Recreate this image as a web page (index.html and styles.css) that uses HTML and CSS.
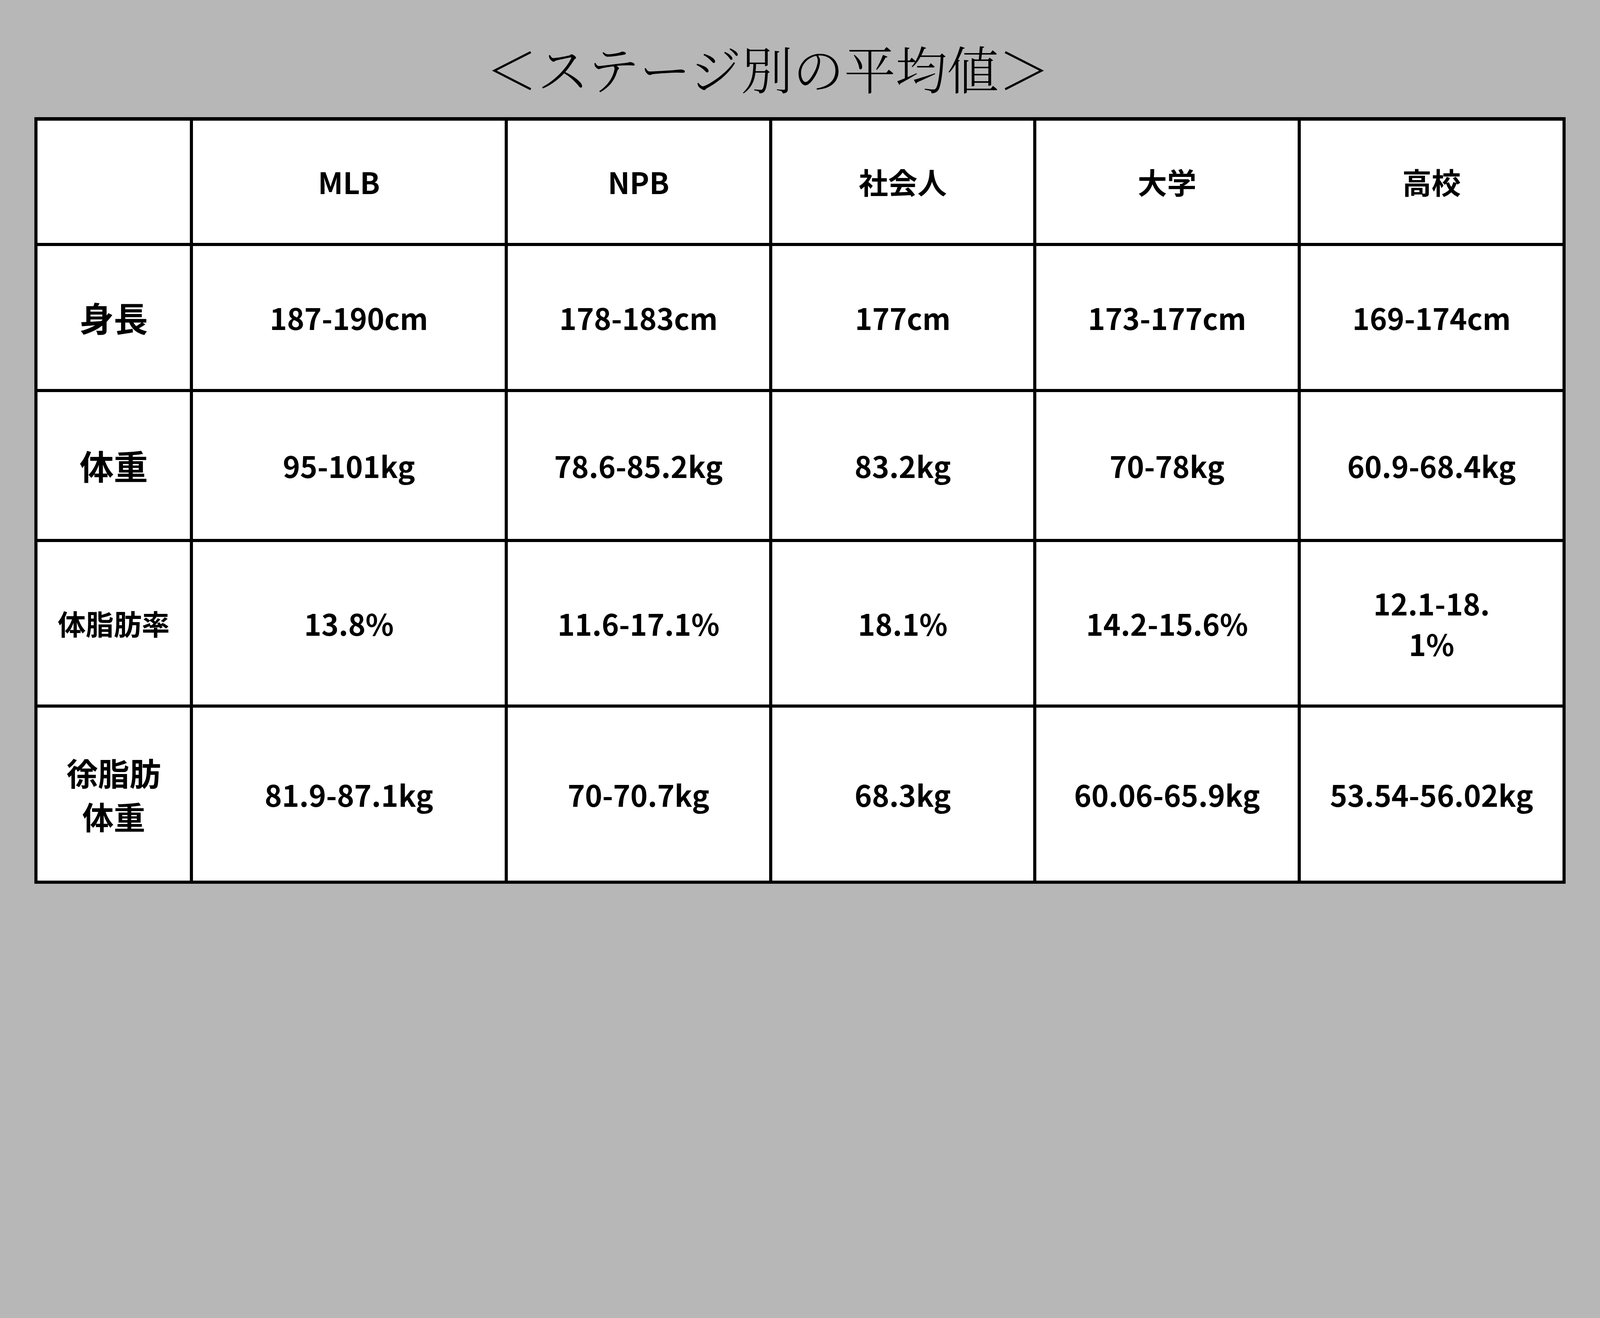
FILE: index.html
```html
<!DOCTYPE html>
<html lang="ja">
<head>
<meta charset="utf-8">
<title>ステージ別の平均値</title>
<link rel="stylesheet" href="styles.css">
</head>
<body>
<div class="page">
  <h1 class="title">＜ステージ別の平均値＞</h1>
  <div class="table">
    <div class="cell corner"></div>
    <div class="cell head">MLB</div>
    <div class="cell head">NPB</div>
    <div class="cell head">社会人</div>
    <div class="cell head">大学</div>
    <div class="cell head">高校</div>

    <div class="cell rowhead big">身長</div>
    <div class="cell">187-190cm</div>
    <div class="cell">178-183cm</div>
    <div class="cell">177cm</div>
    <div class="cell">173-177cm</div>
    <div class="cell">169-174cm</div>

    <div class="cell rowhead big">体重</div>
    <div class="cell">95-101kg</div>
    <div class="cell">78.6-85.2kg</div>
    <div class="cell">83.2kg</div>
    <div class="cell">70-78kg</div>
    <div class="cell">60.9-68.4kg</div>

    <div class="cell rowhead small">体脂肪率</div>
    <div class="cell">13.8%</div>
    <div class="cell">11.6-17.1%</div>
    <div class="cell">18.1%</div>
    <div class="cell">14.2-15.6%</div>
    <div class="cell wrap">12.1-18.<br>1%</div>

    <div class="cell rowhead mid">徐脂肪<br>体重</div>
    <div class="cell">81.9-87.1kg</div>
    <div class="cell">70-70.7kg</div>
    <div class="cell">68.3kg</div>
    <div class="cell">60.06-65.9kg</div>
    <div class="cell">53.54-56.02kg</div>
  </div>
</div>
</body>
</html>
```

FILE: styles.css
```css
:root {
  --u: calc(100vw / 6000);
}

html, body {
  margin: 0;
  padding: 0;
  background: #b7b7b7;
  overflow: hidden;
}

.page {
  width: calc(6000 * var(--u));
  height: calc(3375 * var(--u));
  background: #b7b7b7;
  overflow: hidden;
}

.title {
  margin: 0 0 calc(90 * var(--u)) 0;
  padding: calc(155 * var(--u)) calc(240 * var(--u)) 0 0;
  height: calc(195 * var(--u));
  text-align: center;
  font-family: "Noto Serif CJK JP", "Noto Serif JP", "IPAMincho", "Noto Sans CJK JP", serif;
  font-weight: 300;
  font-size: calc(193 * var(--u));
  line-height: calc(195 * var(--u));
  color: #000;
  white-space: nowrap;
}

.table {
  display: grid;
  grid-template-columns:
    calc(571 * var(--u)) calc(1169 * var(--u)) calc(979 * var(--u))
    calc(979 * var(--u)) calc(979 * var(--u)) calc(981 * var(--u));
  grid-template-rows:
    calc(459 * var(--u)) calc(536 * var(--u)) calc(550 * var(--u))
    calc(610 * var(--u)) calc(648 * var(--u));
  gap: calc(12 * var(--u));
  padding: calc(12 * var(--u));
  width: max-content;
  margin-left: calc(129 * var(--u));
  background: #000;
}

.cell {
  background: #fff;
  display: flex;
  align-items: center;
  justify-content: center;
  text-align: center;
  font-family: "Noto Sans CJK JP", "Noto Sans", sans-serif;
  font-weight: 700;
  font-size: calc(110 * var(--u));
  line-height: 1.3;
  color: #000;
}

.wrap {
  line-height: calc(152 * var(--u));
}

.rowhead.big {
  font-size: calc(128 * var(--u));
}

.rowhead.mid {
  font-size: calc(118 * var(--u));
  line-height: calc(163 * var(--u));
}

.rowhead.small {
  font-size: calc(105 * var(--u));
}
```
